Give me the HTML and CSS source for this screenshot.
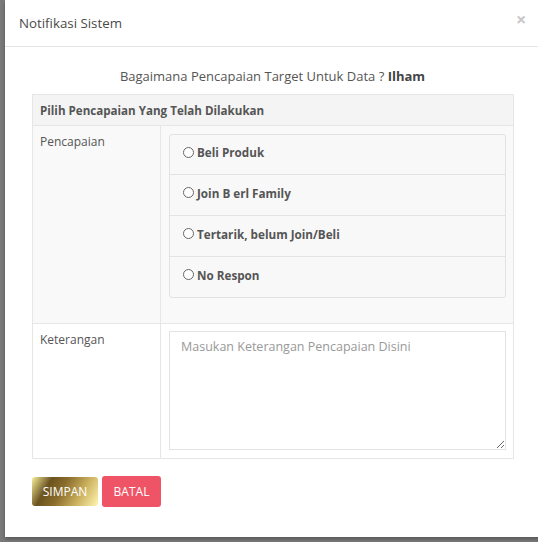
FILE: index.html
```html
<!DOCTYPE html>
<html>
<head>
<meta charset="utf-8">
<link rel="stylesheet" href="styles.css">
</head>
<body>
<div class="backdrop">
  <div class="modal">
    <div class="modal-header">
      <h4 class="modal-title">Notifikasi Sistem</h4>
      <span class="close">×</span>
    </div>
    <div class="modal-body">
      <p class="question">Bagaimana Pencapaian Target Untuk Data ? <b>Ilham</b></p>
      <table class="tbl">
        <tr class="head"><th colspan="2">Pilih Pencapaian Yang Telah Dilakukan</th></tr>
        <tr class="stripe">
          <td class="label">Pencapaian</td>
          <td class="field">
            <div class="options">
              <label class="opt"><span class="radio"></span>Beli Produk</label>
              <label class="opt"><span class="radio"></span>Join B erl Family</label>
              <label class="opt"><span class="radio"></span>Tertarik, belum Join/Beli</label>
              <label class="opt"><span class="radio"></span>No Respon</label>
            </div>
          </td>
        </tr>
        <tr>
          <td class="label">Keterangan</td>
          <td class="field"><textarea placeholder="Masukan Keterangan Pencapaian Disini"></textarea></td>
        </tr>
      </table>
      <div class="actions">
        <button class="btn gold">SIMPAN</button>
        <button class="btn red">BATAL</button>
      </div>
    </div>
  </div>
</div>
</body>
</html>
```
FILE: styles.css
```css
html, body { margin: 0; padding: 0; }
body {
  width: 538px; height: 542px; overflow: hidden;
  font-family: "Open Sans", "Noto Sans", sans-serif;
  color: #555;
}
.backdrop {
  height: 542px;
  background: #7a7a7a;
  padding-left: 5px;
  box-sizing: border-box;
  overflow: hidden;
}
.modal {
  width: 560px;
  height: 537px;
  background: #fff;
  box-shadow: 0 2px 4px rgba(0,0,0,0.3);
}
.modal-header {
  height: 47px;
  box-sizing: border-box;
  border-bottom: 1px solid #e5e5e5;
  display: flex;
  align-items: center;
  position: relative;
  padding-left: 14px;
}
.modal-title {
  margin: 0;
  font-size: 13.3px;
  font-weight: 400;
  color: #4a4a4a;
}
.close {
  position: absolute;
  left: 511px;
  top: 10px;
  font-size: 18px;
  font-weight: 700;
  color: #c8c8c8;
  line-height: 1;
}
.modal-body {
  padding: 19px 0 0 27px;
}
.question {
  margin: 0 0 8px;
  width: 481px;
  text-align: center;
  font-size: 13px;
  font-weight: 400;
  color: #555;
  line-height: 20px;
}
.question b { font-weight: 700; color: #444; }
.tbl {
  width: 482px;
  border-collapse: collapse;
  font-size: 12px;
}
.tbl th, .tbl td { border: 1px solid #e6e6e6; }
.head th {
  background: #f4f4f4;
  text-align: left;
  font-weight: 700;
  font-size: 11.6px;
  color: #555;
  height: 31px;
  padding: 0 7px;
  box-sizing: border-box;
}
.stripe td { background: #f9f9f9; }
.label {
  width: 128px;
  vertical-align: top;
  padding: 7px 7px 8px;
  color: #555;
}
.field {
  vertical-align: top;
  padding: 8px 7px 25px 8px;
}
.options {
  border: 1px solid #e3e3e3;
  border-radius: 3px;
  background: #f8f8f8;
}
.opt {
  display: flex;
  align-items: center;
  height: 41px;
  box-sizing: border-box;
  padding: 0 0 5px 13px;
  font-weight: 700;
  font-size: 11.7px;
  color: #555;
  border-top: 1px solid #e3e3e3;
}
.opt:first-child { border-top: none; height: 39px; }
.radio {
  width: 9px; height: 9px;
  border: 1px solid #666;
  border-radius: 50%;
  background: #fff;
  margin-right: 3px;
}
.tbl tr:last-child .field { padding: 7px 7px 8px 8px; }
textarea {
  display: block;
  width: 337px;
  height: 119px;
  box-sizing: border-box;
  border: 1px solid #e3e3e3;
  padding: 6px 11px;
  font-family: "Open Sans", sans-serif;
  font-size: 12.5px;
  color: #555;
  resize: both;
  margin: 0;
}
textarea::placeholder { color: #999; }
.actions {
  margin-top: 17px;
  display: flex;
  gap: 4px;
  align-items: center;
}
.btn {
  border: none;
  font-family: "Open Sans", sans-serif;
  font-size: 12px;
  color: #fff;
  padding: 0;
  border-radius: 3px;
}
.gold {
  width: 66px; height: 29px;
  background: linear-gradient(120deg, #f8ef9a 0%, #6b5320 25%, #8a6d2c 45%, #c8ad5c 70%, #fff7b0 100%);
}
.red {
  width: 59px; height: 31px;
  background: #ef5466;
}
```
